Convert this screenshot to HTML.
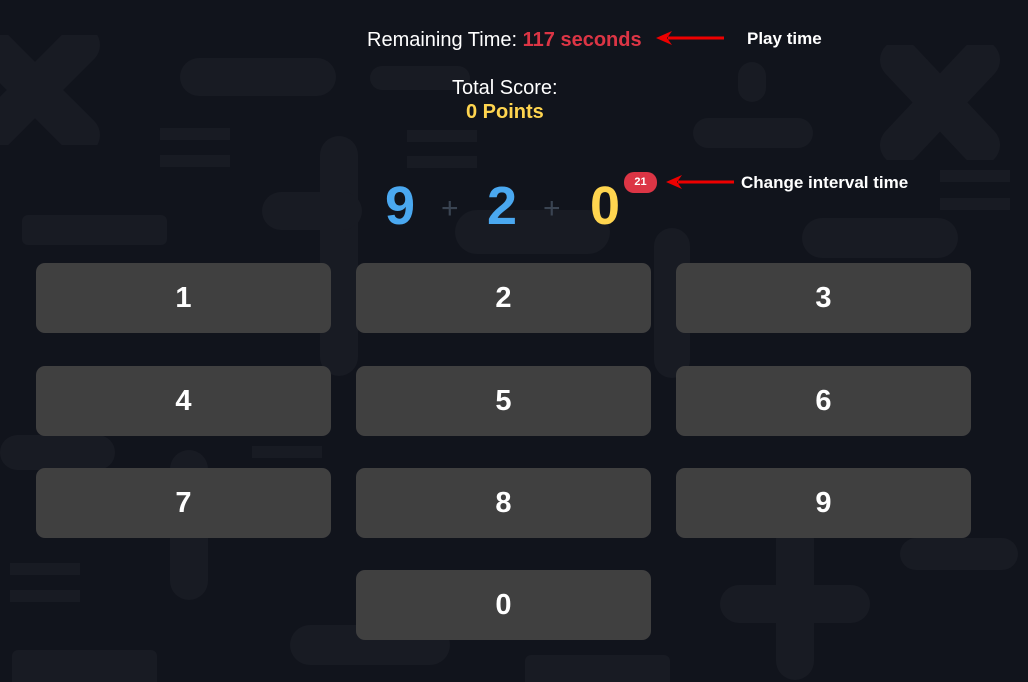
<!DOCTYPE html>
<html style="overflow:hidden;height:682px"><head><style>
body{margin:0;width:1028px;height:682px;background:#11141c;overflow:hidden;position:relative;font-family:"Liberation Sans",sans-serif}
.s{position:absolute;background:#181b23;border-radius:30px}
.r{position:absolute;background:#181b23}
.b{position:absolute;width:295px;height:70px;background:#404040;border-radius:9px;color:#fff;font-weight:bold;font-size:29px;display:flex;align-items:center;justify-content:center}
.t{position:absolute;color:#fff;white-space:nowrap}
</style></head><body>
<div class="s" style="left:180px;top:58px;width:156px;height:38px"></div>
<div class="s" style="left:370px;top:66px;width:100px;height:24px;border-radius:12px"></div>
<div class="s" style="left:693px;top:118px;width:120px;height:30px"></div>
<div class="s" style="left:802px;top:218px;width:156px;height:40px"></div>
<div class="s" style="left:320px;top:136px;width:38px;height:240px"></div>
<div class="s" style="left:262px;top:192px;width:100px;height:38px"></div>
<div class="s" style="left:455px;top:210px;width:155px;height:44px"></div>
<div class="s" style="left:654px;top:228px;width:36px;height:150px"></div>
<div class="s" style="left:22px;top:215px;width:145px;height:30px;border-radius:6px"></div>
<div class="s" style="left:170px;top:450px;width:38px;height:150px"></div>
<div class="s" style="left:0px;top:435px;width:115px;height:35px"></div>
<div class="s" style="left:720px;top:585px;width:150px;height:38px"></div>
<div class="s" style="left:776px;top:520px;width:38px;height:160px"></div>
<div class="s" style="left:900px;top:538px;width:118px;height:32px"></div>
<div class="s" style="left:290px;top:625px;width:160px;height:40px"></div>
<div class="s" style="left:12px;top:650px;width:145px;height:40px;border-radius:6px"></div>
<div class="s" style="left:525px;top:655px;width:145px;height:40px;border-radius:6px"></div>
<div class="s" style="left:738px;top:62px;width:28px;height:40px;border-radius:14px"></div>
<div class="r" style="left:160px;top:128px;width:70px;height:12px"></div>
<div class="r" style="left:160px;top:155px;width:70px;height:12px"></div>
<div class="r" style="left:407px;top:130px;width:70px;height:12px"></div>
<div class="r" style="left:407px;top:156px;width:70px;height:12px"></div>
<div class="r" style="left:940px;top:170px;width:70px;height:12px"></div>
<div class="r" style="left:940px;top:198px;width:70px;height:12px"></div>
<div class="r" style="left:10px;top:563px;width:70px;height:12px"></div>
<div class="r" style="left:10px;top:590px;width:70px;height:12px"></div>
<div class="r" style="left:252px;top:446px;width:70px;height:12px"></div>
<svg style="position:absolute;left:0;top:35px" width="110" height="110"><path d="M-10 10 L80 100 M80 10 L-10 100" stroke="#181b23" stroke-width="40" stroke-linecap="round"/></svg>
<svg style="position:absolute;left:880px;top:45px" width="120" height="115"><path d="M20 15 L100 100 M100 15 L20 100" stroke="#181b23" stroke-width="40" stroke-linecap="round"/></svg>

<div class="t" style="left:367px;top:29px;font-size:20px">Remaining Time: <b style="color:#dc3545">117 seconds</b></div>
<div class="t" style="left:452px;top:77px;font-size:20px">Total Score:</div>
<div class="t" style="left:466px;top:101px;font-size:20px;font-weight:bold;color:#ffd54f">0 Points</div>
<div class="t" style="left:747px;top:29px;font-size:17px;font-weight:bold">Play time</div>
<div class="t" style="left:741px;top:173px;font-size:17px;font-weight:bold">Change interval time</div>
<svg style="position:absolute;left:652px;top:28px" width="80" height="20"><path d="M72 10 H16" stroke="#e00" stroke-width="3"/><path d="M4 10 L20 3 L15 10 L20 17Z" fill="#e00"/></svg>
<svg style="position:absolute;left:662px;top:172px" width="80" height="20"><path d="M72 10 H16" stroke="#e00" stroke-width="3"/><path d="M4 10 L20 3 L15 10 L20 17Z" fill="#e00"/></svg>
<div style="position:absolute;left:624px;top:172px;width:33px;height:21px;background:#dc3545;border-radius:10px;color:#fff;font-size:11px;font-weight:bold;text-align:center;line-height:21px">21</div>
<div class="t" style="left:385px;top:175px;font-size:54px;font-weight:bold;color:#4aa8f0">9</div>
<div class="t" style="left:441px;top:192px;font-size:30px;color:#3a4452">+</div>
<div class="t" style="left:487px;top:175px;font-size:54px;font-weight:bold;color:#4aa8f0">2</div>
<div class="t" style="left:543px;top:192px;font-size:30px;color:#3a4452">+</div>
<div class="t" style="left:590px;top:175px;font-size:54px;font-weight:bold;color:#ffd54f">0</div>

<div class="b" style="left:36px;top:263px">1</div>
<div class="b" style="left:356px;top:263px">2</div>
<div class="b" style="left:676px;top:263px">3</div>
<div class="b" style="left:36px;top:366px">4</div>
<div class="b" style="left:356px;top:366px">5</div>
<div class="b" style="left:676px;top:366px">6</div>
<div class="b" style="left:36px;top:468px">7</div>
<div class="b" style="left:356px;top:468px">8</div>
<div class="b" style="left:676px;top:468px">9</div>
<div class="b" style="left:356px;top:570px">0</div>
</body></html>
